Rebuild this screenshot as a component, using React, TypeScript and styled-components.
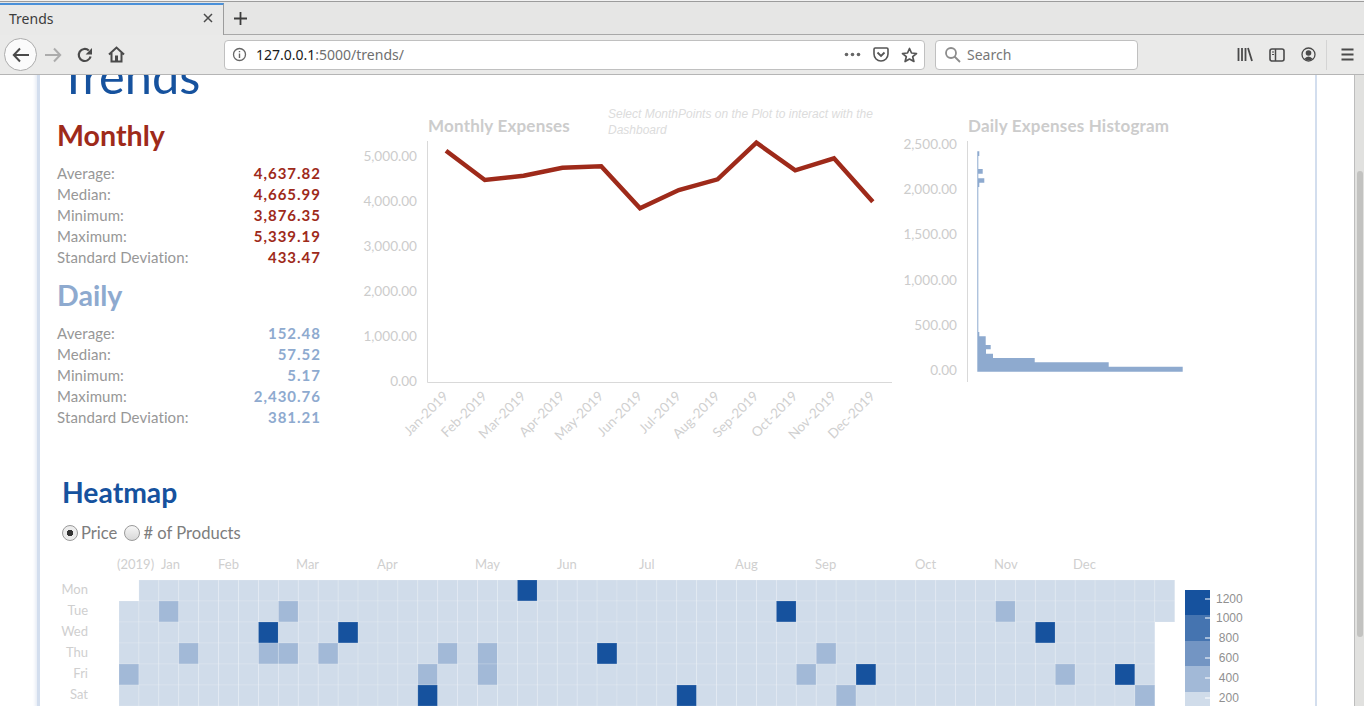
import React from "react";
import styled, { createGlobalStyle } from "styled-components";

const Global = createGlobalStyle`
  html, body { margin: 0; padding: 0; height: 100%; overflow: hidden; background: #fff; }
  #root { height: 100%; }
`;

const Shell = styled.div`
  width: 1364px; height: 706px; display: flex; flex-direction: column; overflow: hidden;
  font-family: "Noto Sans", sans-serif; background: #f2f2f2;
`;
const TabBar = styled.div`
  height: 34px; margin-top: 1px; box-sizing: border-box; display: flex; background: #e6e6e5; border-top: 1px solid #9c9c9c;
`;
const Tab = styled.div`
  width: 224px; box-sizing: border-box; height: 32px; margin-top: 1px; display: flex; align-items: center; justify-content: space-between;
  padding: 0 9px 4px 9px; background: #e9e9e8; border-top: 2px solid #4a90d9; border-right: 1px solid #9c9c9c;
  font-size: 14px; color: #3c3c3c;
`;
const TabStrip = styled.div`
  flex: 1; display: flex; align-items: center; padding-left: 9px; border-bottom: 1px solid #a8a8a8; height: 32px;
`;
const Toolbar = styled.div`
  height: 40px; box-sizing: border-box; display: flex; align-items: center; background: #eaeae9; border-bottom: 1px solid #b5b5b5;
`;
const BackButton = styled.div`
  width: 33px; height: 33px; margin-left: 4px; box-sizing: border-box; border: 1px solid #acacac; border-radius: 50%; background: #fbfbfb;
  display: flex; align-items: center; justify-content: center;
`;
const NavIcon = styled.div<{ $ml: number }>`
  margin-left: ${(p) => p.$ml}px; width: 18px; height: 18px; display: flex; align-items: center; justify-content: center;
`;
const UrlBar = styled.div`
  width: 701px; height: 30px; margin-left: 99px; box-sizing: border-box; background: #fff; border: 1px solid #c0c0c0; border-radius: 4px;
  display: flex; align-items: center; padding: 0 6px 0 7px; font-size: 14px; color: #6f6f6f;
`;
const UrlHost = styled.span` color: #1a1a1a; `;
const UrlText = styled.div` margin-left: 9px; flex: 1; `;
const UrlIcons = styled.div` display: flex; align-items: center; gap: 12px; `;
const SearchBar = styled.div`
  width: 203px; height: 30px; margin-left: 10px; box-sizing: border-box; background: #fff; border: 1px solid #c0c0c0; border-radius: 4px;
  display: flex; align-items: center; gap: 6px; padding-left: 8px; font-size: 14px; color: #777;
`;
const RightTools = styled.div` margin-left: 99px; display: flex; align-items: center; gap: 16px; `;
const ToolDivider = styled.div` width: 1px; height: 30px; background: #d4d4d4; margin-left: -6px; margin-right: -2px; `;

const PageArea = styled.div` flex: 1; display: flex; min-height: 0; background: #fff; `;
const Content = styled.div` flex: 1; min-width: 0; overflow: hidden; padding-left: 37px; `;
const Scroll = styled.div`
  width: 10px; box-sizing: border-box; background: #e1e1df; border-left: 1px solid #bdbdbd; padding: 96px 1px 0 2px;
`;
const Thumb = styled.div` height: 466px; border-radius: 4px; background: #c2c2c0; `;

const Container = styled.div`
  width: 1280px; box-sizing: border-box; height: 800px; margin-top: -30px;
  border-left: 3px solid #d3deee; border-right: 2px solid #d3deee; font-family: Lato, sans-serif;
  box-shadow: -3px 0 3px -1px #e9eef6;
  padding: 0 0 0 17px;
`;
const Title = styled.h1`
  margin: 0 0 0 2px; font-size: 48.7px; line-height: 60px; font-weight: 400; color: #16529e; height: 72px;
`;
const TopRow = styled.div` display: flex; height: 350px; `;
const StatsCol = styled.div` width: 264px; flex: none; `;
const StatHeading = styled.h2<{ $color: string }>`
  margin: 0; font-size: 28.6px; line-height: 36px; font-weight: 700; color: ${(p) => p.$color}; height: 46px;
`;
const StatRow = styled.div` display: flex; justify-content: space-between; height: 21px; line-height: 21px; font-size: 15px; letter-spacing: 0.1px; color: #979797; `;
const StatValue = styled.span<{ $color: string }>` font-weight: 700; letter-spacing: 1px; color: ${(p) => p.$color}; `;
const StatsGroup = styled.div` margin-bottom: 9px; `;

const ChartPanel = styled.div<{ $w: number }>` width: ${(p) => p.$w}px; flex: none; margin-top: -11px; `;
const LeadGap = styled.div` width: 39px; flex: none; `;
const ChartSvg = styled.svg` display: block; font-family: Lato, sans-serif; `;

const HeatSection = styled.section` margin-top: 7px; padding-left: 5px; `;
const HeatTitle = styled.h2` margin: 0; font-size: 28.3px; line-height: 36px; font-weight: 700; color: #16529e; `;
const RadioRow = styled.div` display: flex; align-items: center; margin-top: 11px; height: 24px; font-size: 16.6px; color: #7d7d7d; `;
const Radio = styled.span<{ $on?: boolean }>`
  width: 16px; height: 16px; box-sizing: border-box; border-radius: 50%; border: 1px solid #9a9a9a;
  background: ${(p) => (p.$on ? "radial-gradient(circle, #333 0 3px, #ececec 3.5px)" : "linear-gradient(#f6f6f6, #d8d8d8)")};
  margin-right: 3px; margin-left: ${(p) => (p.$on ? "0" : "7px")};
`;
const HeatSvg = styled.svg` display: block; margin-left: -5px; margin-top: 5px; font-family: Lato, sans-serif; `;

const months = ["Jan-2019","Feb-2019","Mar-2019","Apr-2019","May-2019","Jun-2019","Jul-2019","Aug-2019","Sep-2019","Oct-2019","Nov-2019","Dec-2019"];
const lineY = [150.7,180,175.7,167.7,166.3,208.3,190,179.3,142.7,170.3,158.3,201.7];

const X0 = 360, Y0 = 110;

function LineChart() {
  const xs = months.map((_, i) => 446 + i * 38.8);
  const pts = xs.map((x, i) => `${x - X0},${lineY[i] - Y0}`).join(" ");
  return (
    <ChartSvg width={540} height={345} viewBox="0 0 540 345">
      <g transform="translate(0 4)">
        <text x={68} y={22} fontSize={17} letterSpacing={0.2} fontWeight={700} fill="#cccccc">Monthly Expenses</text>
        <text x={248} y={8} fontSize={12} fontStyle="italic" fill="#dcdcdc" fontFamily="'Liberation Sans', sans-serif">Select MonthPoints on the Plot to interact with the</text>
        <text x={248} y={24} fontSize={12} fontStyle="italic" fill="#dcdcdc" fontFamily="'Liberation Sans', sans-serif">Dashboard</text>
        <path d="M67.5 31V272.5H532" fill="none" stroke="#d9d9d9" />
        {["0.00","1,000.00","2,000.00","3,000.00","4,000.00","5,000.00"].map((t, i) => (
          <text key={t} x={57} y={276 - i * 45} textAnchor="end" fontSize={13.6} fill="#cccccc">{t}</text>
        ))}
        <polyline points={pts} fill="none" stroke="#9e2a1a" strokeWidth={4.5} strokeLinejoin="miter" />
        {months.map((m, i) => (
          <text key={m} transform={`translate(${xs[i] - X0 + 3} 287) rotate(-45)`} textAnchor="end" fontSize={13.5} fill="#d0d0d0">{m}</text>
        ))}
      </g>
    </ChartSvg>
  );
}

const steps: [number, number][] = [
  [151.3, 979.3],[156, 978.3],[169, 982.7],[173.7, 978.3],[178.3, 984.3],[182.7, 979.3],[187, 978.3],
  [332, 979.3],[336.3, 985.7],[345, 990.7],[349.3, 986],[353.7, 993],[358, 1034.7],[362.3, 1108.7],[366.7, 1182.7],
];

function Histogram() {
  const H0 = 900, V0 = 110;
  let d = `M${977.3 - H0} ${steps[0][0] - V0}`;
  steps.forEach(([y, r]) => {
    d += `V${y - V0}H${r - H0}`;
  });
  d += `V${371.7 - V0}H${977.3 - H0}Z`;
  return (
    <ChartSvg width={300} height={345} viewBox="0 0 300 345">
      <g transform="translate(0 4)">
        <text x={68} y={22} fontSize={17} letterSpacing={0.2} fontWeight={700} fill="#cccccc">Daily Expenses Histogram</text>
        <path d="M67.5 31V272" fill="none" stroke="#d9d9d9" />
        {["0.00","500.00","1,000.00","1,500.00","2,000.00","2,500.00"].map((t, i) => (
          <text key={t} x={57} y={265 - i * 45.2} textAnchor="end" fontSize={13.6} fill="#cccccc">{t}</text>
        ))}
        <path d={d} fill="#8eaacf" />
      </g>
    </ChartSvg>
  );
}

const DARK: Record<number, number[]> = { 0: [20], 1: [33], 2: [7, 11, 46], 3: [24], 4: [37, 50], 5: [15, 28] };
const LIGHT: Record<number, number[]> = { 0: [], 1: [2, 8, 44], 2: [], 3: [3, 7, 8, 10, 16, 18, 35], 4: [0, 15, 18, 34, 47], 5: [36, 51] };
const days = ["Mon", "Tue", "Wed", "Thu", "Fri", "Sat"];
const monthLabels: [string, number][] = [["(2019) Jan", 117],["Feb", 218],["Mar", 296],["Apr", 377],["May", 475],["Jun", 557],["Jul", 639],["Aug", 735],["Sep", 815],["Oct", 915],["Nov", 994],["Dec", 1073]];
const legendBands: [string, number, number][] = [["#16529e", 40, 25], ["#4574b0", 65, 26], ["#7395c3", 91, 25], ["#a2b9d7", 116, 26], ["#d0dcea", 142, 28]];
const legendLabels: [string, number][] = [["1200", 599],["1000", 618],["800", 638],["600", 658],["400", 678],["200", 698]];

function Heatmap() {
  const L = 57, T = 550;
  const cells: React.ReactNode[] = [];
  for (let d = 0; d < 6; d++) {
    for (let c = 0; c < 53; c++) {
      if (c === 0 && d === 0) continue;
      if (c === 52 && d > 1) continue;
      const fill = DARK[d].includes(c) ? "#16529e" : LIGHT[d].includes(c) ? "#a2b9d7" : "#d0dcea";
      cells.push(
        <rect key={`${d}-${c}`} x={119 + c * 19.92 - L} y={580 + d * 21 - T} width={19.92} height={21} fill={fill} stroke="#fff" strokeOpacity={0.16} strokeWidth={1} />
      );
    }
  }
  return (
    <HeatSvg width={1250} height={170} viewBox="0 0 1250 170">
      {monthLabels.map(([m, x]) => (
        <text key={m} x={x - L} y={19} fontSize={13} wordSpacing={4} fill="#cfcfcf">{m}</text>
      ))}
      {days.map((d, i) => (
        <text key={d} x={88 - L} y={44 + i * 21} textAnchor="end" fontSize={13} fill="#cfcfcf">{d}</text>
      ))}
      {cells}
      {legendBands.map(([col, y, h]) => (
        <rect key={col} x={1128} y={y} width={25} height={h} fill={col} />
      ))}
      {legendLabels.map(([t, y]) => (
        <g key={t}>
          <rect x={1148} y={y - T - 0.5} width={5} height={1} fill="#fff" />
          <text x={1159 + (4 - t.length) * 2.8} y={y - T + 4} fontSize={12} fill="#909090" fontFamily="'Liberation Sans', sans-serif">{t}</text>
        </g>
      ))}
    </HeatSvg>
  );
}

const icon = "#4a4a4a";

const monthly = [["Average:","4,637.82"],["Median:","4,665.99"],["Minimum:","3,876.35"],["Maximum:","5,339.19"],["Standard Deviation:","433.47"]];
const daily = [["Average:","152.48"],["Median:","57.52"],["Minimum:","5.17"],["Maximum:","2,430.76"],["Standard Deviation:","381.21"]];

export default function App() {
  return (
    <Shell>
      <Global />
      <TabBar>
        <Tab>
          <span>Trends</span>
          <svg width="12" height="12" viewBox="0 0 12 12"><path d="M2 2L10 10M10 2L2 10" stroke="#4a4a4a" strokeWidth="1.5" /></svg>
        </Tab>
        <TabStrip>
          <svg width="15" height="15" viewBox="0 0 15 15"><path d="M7.5 1V14M1 7.5H14" stroke="#3c3c3c" strokeWidth="1.8" /></svg>
        </TabStrip>
      </TabBar>
      <Toolbar>
        <BackButton>
          <svg width="18" height="16" viewBox="0 0 18 16"><path d="M8 1.5L1.8 8L8 14.5M2 8H17" fill="none" stroke={icon} strokeWidth="2" /></svg>
        </BackButton>
        <NavIcon $ml={7}>
          <svg width="18" height="16" viewBox="0 0 18 16"><path d="M10 1.5L16.2 8L10 14.5M16 8H1" fill="none" stroke="#acacac" strokeWidth="2" /></svg>
        </NavIcon>
        <NavIcon $ml={14}>
          <svg width="16" height="16" viewBox="0 0 16 16"><path d="M13.6 9.5A6 6 0 1 1 11.8 3.5" fill="none" stroke={icon} strokeWidth="2.2" /><path d="M15 1V7.4H8.6Z" fill={icon} /></svg>
        </NavIcon>
        <NavIcon $ml={13}>
          <svg width="17" height="17" viewBox="0 0 17 17"><path d="M1 8.5L8.5 1.5L16 8.5M3.5 7V15.5H13.5V7" fill="none" stroke={icon} strokeWidth="2" /><rect x="7" y="9.5" width="3" height="6" fill={icon} /></svg>
        </NavIcon>
        <UrlBar>
          <svg width="15" height="15" viewBox="0 0 15 15"><circle cx="7.5" cy="7.5" r="6" fill="none" stroke="#666" strokeWidth="1.3" /><path d="M7.5 6.5V11M7.5 4V5.3" stroke="#666" strokeWidth="1.4" /></svg>
          <UrlText><UrlHost>127.0.0.1</UrlHost>:5000/trends/</UrlText>
          <UrlIcons>
            <svg width="17" height="5" viewBox="0 0 17 5"><circle cx="2.5" cy="2.5" r="1.8" fill="#666" /><circle cx="8.5" cy="2.5" r="1.8" fill="#666" /><circle cx="14.5" cy="2.5" r="1.8" fill="#666" /></svg>
            <svg width="16" height="15" viewBox="0 0 16 15"><path d="M1 2.2Q1 1 2.2 1H13.8Q15 1 15 2.2V7A7 7 0 0 1 1 7Z" fill="none" stroke="#555" strokeWidth="1.6" /><path d="M4.5 5.5L8 9L11.5 5.5" fill="none" stroke="#555" strokeWidth="1.8" /></svg>
            <svg width="17" height="16" viewBox="0 0 17 16"><path d="M8.5 1.5L10.5 6L15.5 6.5L11.7 9.7L12.9 14.5L8.5 12L4.1 14.5L5.3 9.7L1.5 6.5L6.5 6Z" fill="none" stroke="#555" strokeWidth="1.7" strokeLinejoin="round" /></svg>
          </UrlIcons>
        </UrlBar>
        <SearchBar>
          <svg width="17" height="17" viewBox="0 0 17 17"><circle cx="7" cy="7" r="5" fill="none" stroke="#8c8c8c" strokeWidth="1.8" /><path d="M10.5 10.5L16 16" stroke="#8c8c8c" strokeWidth="1.8" /></svg>
          <span>Search</span>
        </SearchBar>
        <RightTools>
          <svg width="16" height="15" viewBox="0 0 16 15"><path d="M1.5 1V14M5 1V14M8.5 1V14M11 1L15 14" fill="none" stroke={icon} strokeWidth="1.8" /></svg>
          <svg width="16" height="14" viewBox="0 0 16 14"><rect x="1" y="1" width="14" height="12" rx="2" fill="none" stroke={icon} strokeWidth="1.6" /><path d="M6.5 1V13" stroke={icon} strokeWidth="1.5" /><path d="M3 4H5M3 6.5H5" stroke={icon} /></svg>
          <svg width="15" height="15" viewBox="0 0 15 15"><circle cx="7.5" cy="7.5" r="6.5" fill="none" stroke={icon} strokeWidth="1.3" /><circle cx="7.5" cy="6" r="2.8" fill={icon} /><path d="M3 12Q7.5 7 12 12Q7.5 14.5 3 12Z" fill={icon} /></svg>
          <ToolDivider />
          <svg width="13" height="13" viewBox="0 0 13 13"><path d="M0.5 1.5H12.5M0.5 6.5H12.5M0.5 11.5H12.5" stroke={icon} strokeWidth="1.9" /></svg>
        </RightTools>
      </Toolbar>
      <PageArea>
        <Content>
          <Container>
            <Title>Trends</Title>
            <TopRow>
              <StatsCol>
                <StatHeading $color="#9e2a1a">Monthly</StatHeading>
                <StatsGroup>
                  {monthly.map(([k, v]) => (
                    <StatRow key={k}><span>{k}</span><StatValue $color="#9e2a1a">{v}</StatValue></StatRow>
                  ))}
                </StatsGroup>
                <StatHeading $color="#8eaacf">Daily</StatHeading>
                <StatsGroup>
                  {daily.map(([k, v]) => (
                    <StatRow key={k}><span>{k}</span><StatValue $color="#8eaacf">{v}</StatValue></StatRow>
                  ))}
                </StatsGroup>
              </StatsCol>
              <LeadGap />
              <ChartPanel $w={540}><LineChart /></ChartPanel>
              <ChartPanel $w={300}><Histogram /></ChartPanel>
            </TopRow>
            <HeatSection>
              <HeatTitle>Heatmap</HeatTitle>
              <RadioRow><Radio $on />Price<Radio /># of Products</RadioRow>
              <Heatmap />
            </HeatSection>
          </Container>
        </Content>
        <Scroll><Thumb /></Scroll>
      </PageArea>
    </Shell>
  );
}
